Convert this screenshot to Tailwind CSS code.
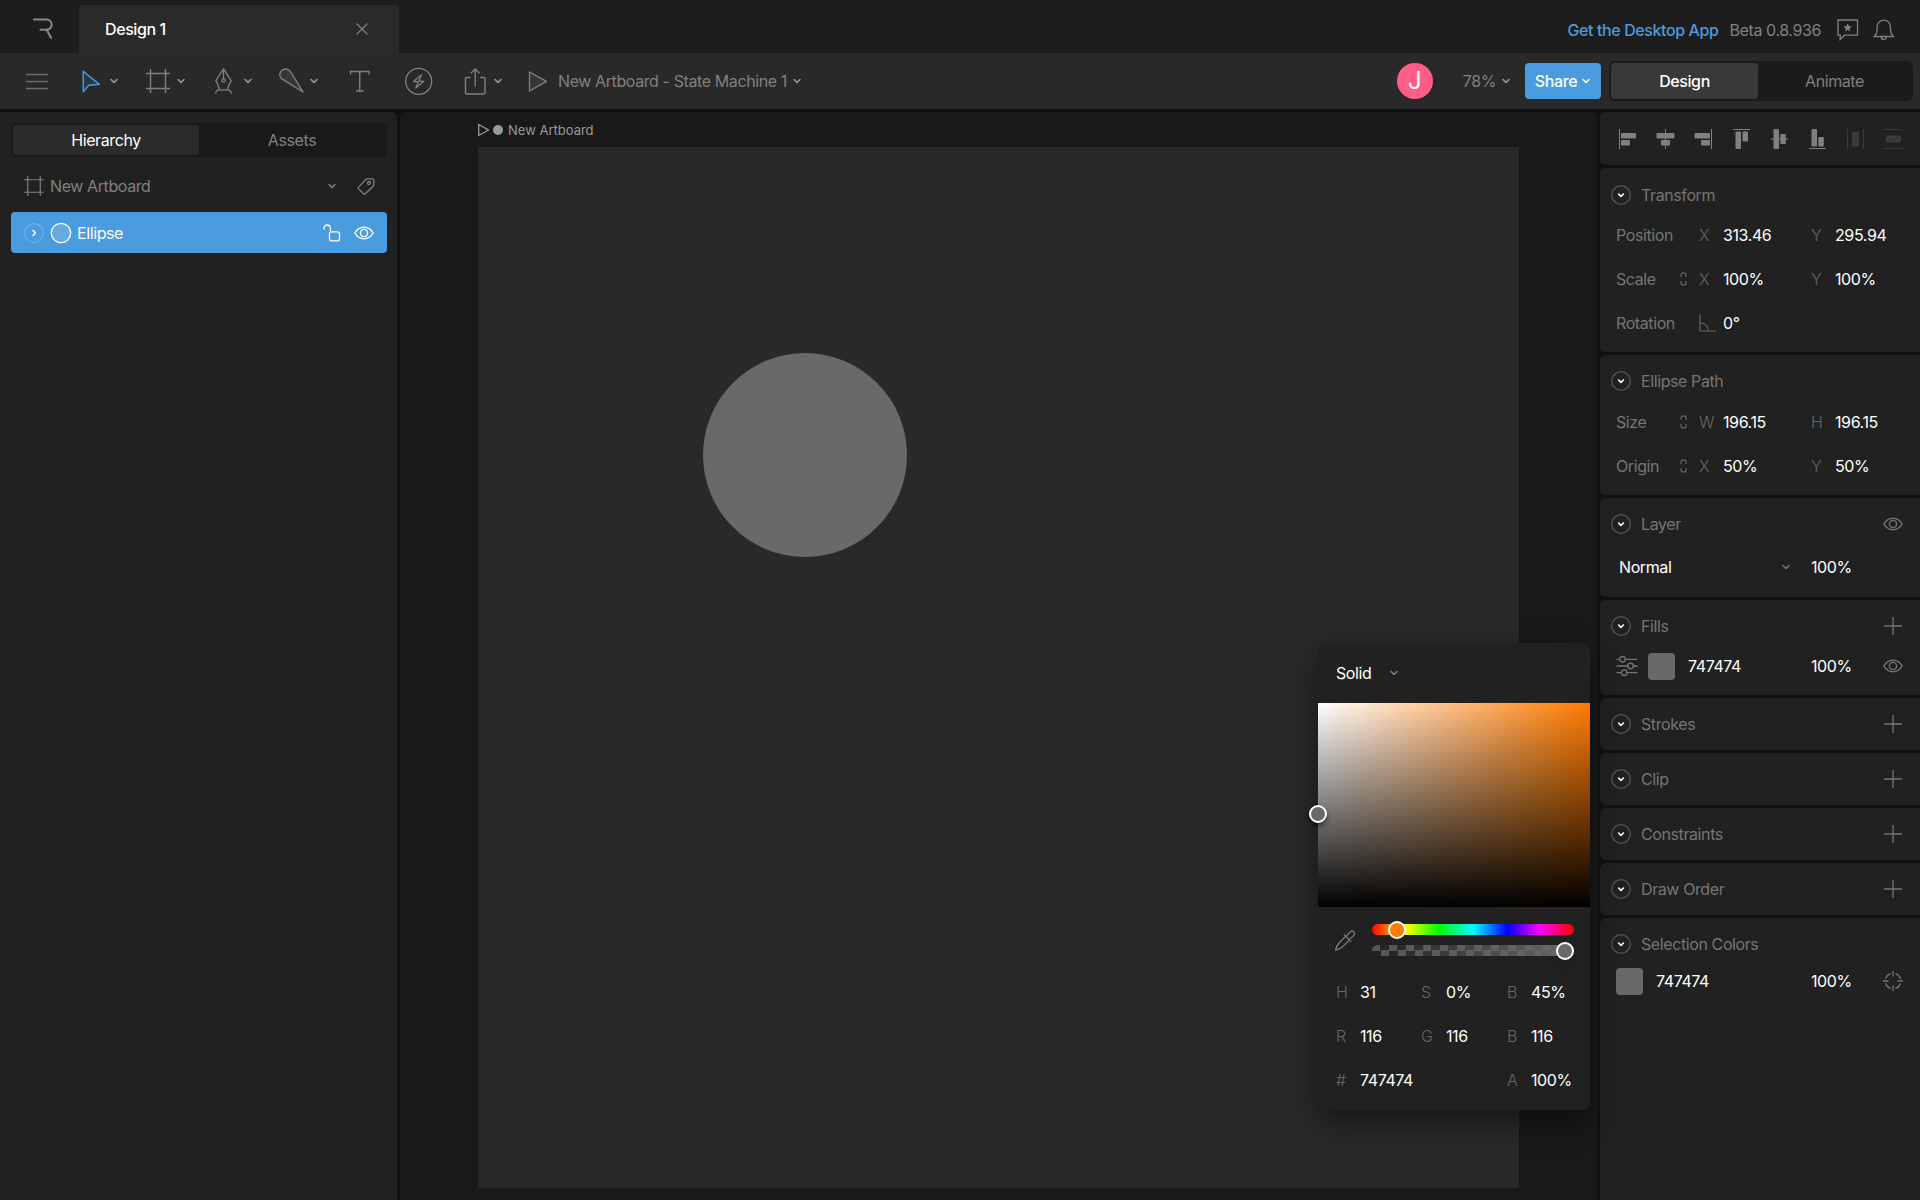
<!DOCTYPE html>
<html lang="en">
<head>
  <meta charset="utf-8" />
  <meta name="viewport" content="width=device-width, initial-scale=1" />
  <title>Design 1</title>
  <script src="https://cdn.jsdelivr.net/npm/@tailwindcss/browser@4"></script>
</head>
<body class="bg-[#111] font-['Inter',sans-serif] text-base leading-6 text-[#808080] min-h-screen flex flex-col overflow-hidden">

  <!-- Shared icons -->
  <svg class="hidden">
    <symbol id="chevron" viewBox="0 0 10 10"><path d="M2 3.5l3 3 3-3" fill="none" stroke="currentColor" stroke-width="1.5" stroke-linecap="round" stroke-linejoin="round"/></symbol>
    <symbol id="toggle" viewBox="0 0 20 20"><circle cx="10" cy="10" r="9.3" fill="none" stroke="#555" stroke-width="1.3"/><path d="M7.6 9l2.4 2.3L12.4 9" fill="none" stroke="#fff" stroke-width="1.6" stroke-linecap="round" stroke-linejoin="round"/></symbol>
    <symbol id="plus" viewBox="0 0 20 20"><path d="M10 1v18M1 10h18" stroke="currentColor" stroke-width="1.3"/></symbol>
    <symbol id="eye" viewBox="0 0 20 20"><path d="M.8 10C3 6.300 6.200 4.200 10 4.200S17 6.300 19.200 10C17 13.700 13.800 15.800 10 15.800S3 13.700.8 10z" fill="none" stroke="currentColor" stroke-width="1.400"/><circle cx="10" cy="10" r="3.600" fill="none" stroke="currentColor" stroke-width="1.400"/></symbol>
    <symbol id="link" viewBox="0 0 8 14"><path d="M1 5V3.500a2.500 2.600 0 0 1 5 0V5M1 9v1.500a2.500 2.600 0 0 0 5 0V9" fill="none" stroke="currentColor" stroke-width="1.200"/></symbol>
    <symbol id="frame" viewBox="0 0 24 24"><path d="M4.500 0v24M19.500 0v24M0 4.500h24M0 19.500h24" stroke="currentColor" stroke-width="1.400" fill="none"/></symbol>
  </svg>

  <!-- Tab bar -->
  <header class="h-[53px] bg-[#1d1d1d] flex items-end justify-between">
    <div class="flex items-end h-full">
      <a href="#" aria-label="Home" class="w-[79px] h-[53px] flex items-center pl-8 pt-[5px]">
        <svg class="w-[22px] h-[22px]" viewBox="0 0 22 22" fill="none" stroke="#8a8a8a" stroke-width="2" stroke-linecap="round"><path d="M2 1.500h12.500a4.800 4.800 0 0 1 0 10.200H8.500M14.800 12l4.300 8"/></svg>
      </a>
      <div class="w-[320px] h-12 bg-[#2a2a2a] rounded-t flex items-center justify-between pl-[26px] pr-[25px] text-white font-medium">
        <span class="tracking-tight">Design 1</span>
        <button aria-label="Close tab" class="p-1 text-[#808080]"><svg class="w-4 h-4" viewBox="0 0 16 16"><path d="M2.500 2.500l11 11M13.500 2.500l-11 11" stroke="currentColor" stroke-width="1.200"/></svg></button>
      </div>
    </div>
    <div class="flex items-center h-[53px] pt-[6px] pr-[25px] tracking-tight">
      <a href="#" class="text-[#4b9bdf] font-medium">Get the Desktop App</a>
      <span class="ml-[11px]">Beta 0.8.936</span>
      <button aria-label="Feedback" class="ml-4"><svg class="w-[22px] h-[22px]" viewBox="0 0 22 22"><path d="M1 1h19.500v15.200H7.500L3.200 20.500V16.200H1z" fill="none" stroke="currentColor" stroke-width="1.300"/><path d="M10.700 4.300l1.200 2.800 3 .3-2.300 2 .7 3-2.600-1.600-2.600 1.600.7-3-2.300-2 3-.3z" fill="currentColor"/></svg></button>
      <button aria-label="Notifications" class="ml-[14px]"><svg class="w-[22px] h-[22px]" viewBox="0 0 22 22" fill="none" stroke="currentColor" stroke-width="1.300"><path d="M1.300 17.500h19c-2-1.800-2.800-3.500-2.800-6V8c0-4-2.800-6.800-6.700-6.800S4.100 4 4.100 8v3.500c0 2.500-.8 4.200-2.800 6zM8 17.500a2.800 3 0 0 0 5.600 0"/></svg></button>
    </div>
  </header>

  <!-- Toolbar -->
  <div class="h-14 bg-[#292929] flex items-center justify-between pl-[26px] pr-[7px]">
    <div class="flex items-center">
      <button aria-label="Menu" class="w-14"><svg class="w-[22px] h-6" viewBox="0 0 22 24"><path d="M0 5.500h22M0 12.500h22M0 19.500h22" stroke="#6c6c6c" stroke-width="1.300"/></svg></button>
      <button aria-label="Select" class="w-16 flex items-center gap-[3px]">
        <svg class="w-6 h-7" viewBox="0 0 24 28"><path d="M1.200 4.200L17.300 17.400 6.800 18.300 1.200 24.900z" fill="#28394a" stroke="#4b9bdf" stroke-width="1.400" stroke-linejoin="round"/></svg>
        <svg class="w-[10px] h-[10px] text-[#9a9a9a]"><use href="#chevron"/></svg>
      </button>
      <button aria-label="Artboard" class="w-[69px] flex items-center gap-[6px]">
        <svg class="w-6 h-6"><use href="#frame"/></svg>
        <svg class="w-[10px] h-[10px] text-[#9a9a9a]"><use href="#chevron"/></svg>
      </button>
      <button aria-label="Pen" class="w-16 flex items-center gap-[10px]">
        <svg class="w-[18px] h-7" viewBox="0 0 18 28" fill="none" stroke="currentColor" stroke-width="1.300"><path d="M8.500 1.500v10.200M8.500 1.800L.8 13.700c1.700 2.600 2.900 5.400 3.600 9.100h8.200c.7-3.700 1.900-6.500 3.600-9.100zM.5 26.500c.5-2.500 1.700-3.700 3.900-3.700M16.500 26.500c-.5-2.500-1.700-3.700-3.900-3.700"/><circle cx="8.500" cy="13.500" r="1.700"/></svg>
        <svg class="w-[10px] h-[10px] text-[#9a9a9a]"><use href="#chevron"/></svg>
      </button>
      <button aria-label="Bone" class="w-[70px] flex items-center gap-[5px]">
        <svg class="w-[25px] h-7" viewBox="0 0 25 28"><path d="M24 25L2.200 11.400C-.3 8.300.8 4 4.500 2.500c3.200-1.200 6.500.2 7.700 3.300z" fill="#373737" stroke="currentColor" stroke-width="1.400" stroke-linejoin="round"/></svg>
        <svg class="w-[10px] h-[10px] text-[#9a9a9a]"><use href="#chevron"/></svg>
      </button>
      <button aria-label="Text" class="w-14"><svg class="w-[22px] h-7" viewBox="0 0 22 28"><path d="M1.500 7.500v-3H20v3M10.700 4.500V24M7 24h7.500" fill="none" stroke="currentColor" stroke-width="1.400"/></svg></button>
      <button aria-label="Events" class="w-[59px]"><svg class="w-7 h-7" viewBox="0 0 28 28" fill="none" stroke="currentColor" stroke-width="1.300" stroke-linejoin="round"><circle cx="13.700" cy="14.300" r="13"/><path d="M16.500 7.800L8.500 14.500l4.800.3-2.500 6.200 8-6.700-4.800-.3z"/></svg></button>
      <button aria-label="Export" class="w-16 flex items-center gap-[7px]">
        <svg class="w-[22px] h-7" viewBox="0 0 22 28" fill="none" stroke="currentColor" stroke-width="1.400"><path d="M6.500 10.500H2.500a1 1 0 0 0-1 1V26a1 1 0 0 0 1 1H20a1 1 0 0 0 1-1V11.500a1 1 0 0 0-1-1H16M11.200 19.500V2M6.800 6.300l4.400-4.400 4.400 4.400"/></svg>
        <svg class="w-[10px] h-[10px] text-[#9a9a9a]"><use href="#chevron"/></svg>
      </button>
      <button class="flex items-center tracking-tight">
        <svg class="w-[22px] h-7 mr-2" viewBox="0 0 22 28"><path d="M1.500 5L18.500 14.400 1.500 24z" fill="#373737" stroke="currentColor" stroke-width="1.300" stroke-linejoin="round"/></svg>
        New Artboard - State Machine 1
        <svg class="w-[10px] h-[10px] text-[#9a9a9a] ml-[5px]"><use href="#chevron"/></svg>
      </button>
    </div>
    <div class="flex items-center">
      <button aria-label="Account" class="w-9 h-9 rounded-full bg-[#ff5c87] text-white text-2xl">J</button>
      <button class="flex items-center gap-[5px] ml-[30px] tracking-tight">78%<svg class="w-[10px] h-[10px] text-[#9a9a9a]"><use href="#chevron"/></svg></button>
      <button class="ml-[14px] w-[76px] h-9 rounded bg-[#4b9bdf] text-white font-medium tracking-tight flex items-center justify-center gap-1">Share<svg class="w-[10px] h-[10px]"><use href="#chevron"/></svg></button>
      <div role="tablist" class="ml-2 w-[304px] h-10 rounded-md bg-[#1b1b1b] p-[2px] flex tracking-tight">
        <button role="tab" aria-selected="true" class="w-[147px] rounded bg-[#393939] text-white font-medium">Design</button>
        <button role="tab" aria-selected="false" class="flex-1">Animate</button>
      </div>
    </div>
  </div>

  <div class="flex flex-1 gap-[3px] pt-[3px]">

    <!-- Hierarchy -->
    <aside class="w-[397px] shrink-0 rounded-tr-md bg-[#212121] pl-[11px] pr-[10px] pt-[11px] tracking-tight">
      <div role="tablist" class="h-[34px] rounded-md bg-[#191919] p-[2px] flex">
        <button role="tab" aria-selected="true" class="w-1/2 rounded bg-[#2b2b2b] text-white">Hierarchy</button>
        <button role="tab" aria-selected="false" class="w-1/2">Assets</button>
      </div>
      <div class="h-[55px] flex items-center pl-[13px] pr-3 pt-[3px]">
        <svg class="w-5 h-5"><use href="#frame"/></svg>
        <span class="ml-[6px] flex-1">New Artboard</span>
        <button aria-label="Artboards"><svg class="w-[10px] h-[10px]"><use href="#chevron"/></svg></button>
        <button aria-label="Tag" class="ml-5"><svg class="w-[18px] h-[18px]" viewBox="0 0 18 18" fill="none" stroke="currentColor" stroke-width="1.300" stroke-linejoin="round"><path d="M9.500 1.800h5.500a1.700 1.700 0 0 1 1.700 1.700v5.200L8.300 16.800a1.300 1.300 0 0 1-1.800 0L1.600 11.900a1.300 1.300 0 0 1 0-1.800z"/><circle cx="12" cy="6" r="1.500"/></svg></button>
      </div>
      <div class="h-[41px] rounded-[4px] bg-[#4b9bdf] text-white flex items-center pl-[13px] pr-[13px]">
        <button aria-label="Expand"><svg class="w-5 h-5" viewBox="0 0 20 20" fill="none"><circle cx="10" cy="10" r="9.300" stroke="#73b1e6" stroke-width="1.200"/><path d="M9 7.500l2.400 2.500L9 12.500" stroke="#fff" stroke-width="1.600" stroke-linecap="round" stroke-linejoin="round"/></svg></button>
        <svg class="w-[22px] h-[22px] ml-[6px]" viewBox="0 0 22 22"><circle cx="11" cy="11" r="9.700" fill="#66aae4" stroke="#fff" stroke-width="1.300"/></svg>
        <span class="ml-[5px] flex-1">Ellipse</span>
        <button aria-label="Lock"><svg class="w-[18px] h-[18px]" viewBox="0 0 18 18" fill="none" stroke="#fff" stroke-width="1.300"><path d="M1 5.500V4.200a3.200 3.200 0 0 1 6.400 0V8"/><rect x="6.500" y="7.800" width="10" height="9" rx="2"/></svg></button>
        <button aria-label="Visibility" class="ml-[13px]"><svg class="w-5 h-5"><use href="#eye"/></svg></button>
      </div>
    </aside>

    <!-- Stage -->
    <main class="relative flex-1 rounded-t-md bg-[#191919] px-[78px] pb-3">
      <div class="h-[35px] flex items-center text-[13px] text-[#999]">
        <svg class="w-3 h-[14px]" viewBox="0 0 12 14"><path d="M.7 1.500L10.500 7 .7 12.500z" fill="none" stroke="currentColor" stroke-width="1.300"/></svg>
        <span class="w-[10px] h-[10px] rounded-full bg-[#999] ml-[3px] mr-[5px]"></span>
        New Artboard
      </div>
      <div class="relative aspect-square bg-[#292929]">
        <div class="absolute left-[225px] top-[206px] w-[204px] h-[204px] rounded-full bg-[#696969]"></div>
      </div>

      <!-- Color picker -->
      <section class="absolute right-[7px] top-[531px] w-[272px] h-[467px] rounded-lg bg-[#212121] shadow-[0_12px_30px_rgba(0,0,0,0.45)] tracking-tight">
        <div class="h-[60px] flex items-center pl-[18px] text-white">
          <select aria-label="Fill type" class="appearance-none w-[53px] tracking-tight"><option>Solid</option></select>
          <svg class="w-[10px] h-[10px] text-[#808080] pointer-events-none"><use href="#chevron"/></svg>
        </div>
        <div class="relative h-[204px] bg-[linear-gradient(to_top,#000,transparent),linear-gradient(to_right,#fff,#ff7b00)]">
          <div class="absolute -left-[9px] top-[102px] w-[18px] h-[18px] rounded-full border-2 border-white bg-[#696969] shadow-md shadow-black/50"></div>
        </div>
        <div class="flex pl-4 pr-4 pt-[17px]">
          <button aria-label="Pick color" class="w-[38px] h-[34px]"><svg class="w-[22px] h-[22px]" viewBox="0 0 22 22" fill="none" stroke="currentColor" stroke-width="1.200" stroke-linejoin="round"><path d="M11.800 6.200L4.500 13.500c-1.800 1.800-2.300 3.800-3 6.700 2.900-.7 4.900-1.200 6.700-3l7.300-7.300M9.800 4.400l7.500 7.500M12 6.500c2-2 3.300-4.300 5.100-5.200 2-.9 4.100 1.200 3.200 3.200-.9 1.800-3.200 3.100-5.200 5.100"/></svg></button>
          <div class="flex-1 flex flex-col gap-[10px]">
            <input type="range" aria-label="Hue" min="0" max="360" value="31" class="block w-full h-[11px] appearance-none rounded-full bg-[linear-gradient(to_right,#f00,#ff0_17%,#0f0_33%,#0ff_50%,#00f_67%,#f0f_83%,#f00)] [&::-webkit-slider-thumb]:appearance-none [&::-webkit-slider-thumb]:w-[18px] [&::-webkit-slider-thumb]:h-[18px] [&::-webkit-slider-thumb]:rounded-full [&::-webkit-slider-thumb]:border-2 [&::-webkit-slider-thumb]:border-white [&::-webkit-slider-thumb]:bg-[#ff7b00]" />
            <div class="rounded-full bg-[conic-gradient(#212121_25%,#555_0_50%,#212121_0_75%,#555_0)] bg-[length:17px_11px]">
              <input type="range" aria-label="Alpha" min="0" max="100" value="100" class="block w-full h-[11px] appearance-none rounded-full bg-[linear-gradient(to_right,transparent,#696969)] [&::-webkit-slider-thumb]:appearance-none [&::-webkit-slider-thumb]:w-[18px] [&::-webkit-slider-thumb]:h-[18px] [&::-webkit-slider-thumb]:rounded-full [&::-webkit-slider-thumb]:border-2 [&::-webkit-slider-thumb]:border-white [&::-webkit-slider-thumb]:bg-[#696969] [&::-webkit-slider-thumb]:shadow-lg" />
            </div>
          </div>
        </div>
        <div class="grid grid-cols-[24px_61px_25px_61px_24px_1fr] auto-rows-[44px] items-center pl-[18px] pt-3">
          <label for="hue" class="font-light text-[#666]">H</label><input id="hue" value="31" class="w-full text-white tracking-tight" />
          <label for="sat" class="font-light text-[#666]">S</label><input id="sat" value="0%" class="w-full text-white tracking-tight" />
          <label for="bri" class="font-light text-[#666]">B</label><input id="bri" value="45%" class="w-full text-white tracking-tight" />
          <label for="red" class="font-light text-[#666]">R</label><input id="red" value="116" class="w-full text-white tracking-tight" />
          <label for="green" class="font-light text-[#666]">G</label><input id="green" value="116" class="w-full text-white tracking-tight" />
          <label for="blue" class="font-light text-[#666]">B</label><input id="blue" value="116" class="w-full text-white tracking-tight" />
          <label for="hex" class="font-light text-[#666]">#</label><input id="hex" value="747474" class="col-span-3 w-full text-white tracking-tight" />
          <label for="alpha" class="font-light text-[#666]">A</label><input id="alpha" value="100%" class="w-full text-white tracking-tight" />
        </div>
      </section>
    </main>

    <!-- Inspector -->
    <aside class="w-[320px] shrink-0 flex flex-col gap-[3px] tracking-tight text-[#757575]">
      <div class="h-[53px] rounded-l-md bg-[#212121] flex items-center gap-[18px] pl-[18px] text-[#808080]">
        <button aria-label="Align left"><svg class="w-5 h-5" viewBox="0 0 20 20" fill="currentColor"><path d="M1 0h1v20H1z"/><rect x="3" y="4" width="15" height="5.500" rx="1"/><rect x="3" y="11" width="9" height="5.500" rx="1"/></svg></button>
        <button aria-label="Align center"><svg class="w-5 h-5" viewBox="0 0 20 20" fill="currentColor"><path d="M9 0h1v20H9z"/><rect x="0.500" y="4" width="18" height="5.500" rx="1"/><rect x="5" y="11" width="9" height="5.500" rx="1"/></svg></button>
        <button aria-label="Align right"><svg class="w-5 h-5" viewBox="0 0 20 20" fill="currentColor"><path d="M17 0h1v20h-1z"/><rect x="0.500" y="4" width="15.500" height="5.500" rx="1"/><rect x="7" y="11" width="9" height="5.500" rx="1"/></svg></button>
        <button aria-label="Align top"><svg class="w-5 h-5" viewBox="0 0 20 20" fill="currentColor"><path d="M1 0h17v1H1z"/><rect x="3.500" y="2.500" width="5.500" height="17.500" rx="1"/><rect x="10.500" y="2.500" width="5.500" height="10" rx="1"/></svg></button>
        <button aria-label="Align middle"><svg class="w-5 h-5" viewBox="0 0 20 20" fill="currentColor"><path d="M.5 9.500h17.500v1H.5z"/><rect x="3.500" y="0" width="5.500" height="20" rx="1"/><rect x="10.300" y="5" width="5.500" height="10" rx="1"/></svg></button>
        <button aria-label="Align bottom"><svg class="w-5 h-5" viewBox="0 0 20 20" fill="currentColor"><path d="M1 19h17v1H1z"/><rect x="3.500" y="0" width="5.500" height="17.500" rx="1"/><rect x="10.300" y="8" width="5.500" height="9.500" rx="1"/></svg></button>
        <button aria-label="Distribute horizontally" class="text-[#3a3a3a]"><svg class="w-5 h-5" viewBox="0 0 20 20" fill="currentColor"><path d="M1 0h1v20H1zM17 0h1v20h-1z"/><rect x="6" y="2.500" width="7" height="15" rx="1"/></svg></button>
        <button aria-label="Distribute vertically" class="text-[#3a3a3a]"><svg class="w-5 h-5" viewBox="0 0 20 20" fill="currentColor"><path d="M0 0h19v1H0zM0 19h19v1H0z"/><rect x="2" y="6.500" width="15" height="7" rx="2"/></svg></button>
      </div>

      <section class="rounded-l-md bg-[#212121] pb-[7px]">
        <h2 class="h-[45px] pt-2 pl-[11px] flex items-center gap-[10px]"><button aria-label="Toggle Transform"><svg class="w-5 h-5"><use href="#toggle"/></svg></button>Transform</h2>
        <div class="grid grid-cols-[64px_19px_24px_88px_24px_1fr] auto-rows-[44px] items-center pl-4">
          <span class="col-span-2">Position</span>
          <label for="px" class="font-light text-[#666]">X</label><input id="px" value="313.46" class="w-full text-white tracking-tight" />
          <label for="py" class="font-light text-[#666]">Y</label><input id="py" value="295.94" class="w-full text-white tracking-tight" />
          <span>Scale</span><svg class="w-2 h-[14px] text-[#666]"><use href="#link"/></svg>
          <label for="sx" class="font-light text-[#666]">X</label><input id="sx" value="100%" class="w-full text-white tracking-tight" />
          <label for="sy" class="font-light text-[#666]">Y</label><input id="sy" value="100%" class="w-full text-white tracking-tight" />
          <label for="rot" class="col-span-2">Rotation</label>
          <svg class="w-[18px] h-[18px] text-[#666]" viewBox="0 0 18 18" fill="none" stroke="currentColor" stroke-width="1.200"><path d="M1 .5v16.500h16M1 9c5 0 8 3 8 8"/></svg>
          <input id="rot" value="0°" class="w-full text-white tracking-tight" />
        </div>
      </section>

      <section class="rounded-l-md bg-[#212121] pb-[7px]">
        <h2 class="h-[45px] pt-[7px] pl-[11px] flex items-center gap-[10px]"><button aria-label="Toggle Ellipse Path"><svg class="w-5 h-5"><use href="#toggle"/></svg></button>Ellipse Path</h2>
        <div class="grid grid-cols-[64px_19px_24px_88px_24px_1fr] auto-rows-[44px] items-center pl-4">
          <span>Size</span><svg class="w-2 h-[14px] text-[#666]"><use href="#link"/></svg>
          <label for="w" class="font-light text-[#666]">W</label><input id="w" value="196.15" class="w-full text-white tracking-tight" />
          <label for="h" class="font-light text-[#666]">H</label><input id="h" value="196.15" class="w-full text-white tracking-tight" />
          <span>Origin</span><svg class="w-2 h-[14px] text-[#666]"><use href="#link"/></svg>
          <label for="ox" class="font-light text-[#666]">X</label><input id="ox" value="50%" class="w-full text-white tracking-tight" />
          <label for="oy" class="font-light text-[#666]">Y</label><input id="oy" value="50%" class="w-full text-white tracking-tight" />
        </div>
      </section>

      <section class="rounded-l-md bg-[#212121] pb-[6px]">
        <h2 class="h-[45px] pt-[7px] pl-[11px] pr-[17px] flex items-center gap-[10px]"><button aria-label="Toggle Layer"><svg class="w-5 h-5"><use href="#toggle"/></svg></button><span class="flex-1">Layer</span><button aria-label="Layer visibility"><svg class="w-5 h-5"><use href="#eye"/></svg></button></h2>
        <div class="h-12 flex items-center pl-[19px]">
          <select aria-label="Blend mode" class="appearance-none w-[162px] text-white tracking-tight"><option>Normal</option></select>
          <svg class="w-[10px] h-[10px] mr-5 pointer-events-none"><use href="#chevron"/></svg>
          <input aria-label="Layer opacity" value="100%" class="w-[72px] text-white tracking-tight" />
        </div>
      </section>

      <section class="rounded-l-md bg-[#212121] pb-2">
        <h2 class="h-[45px] pt-[7px] pl-[11px] pr-[17px] flex items-center gap-[10px]"><button aria-label="Toggle Fills"><svg class="w-5 h-5"><use href="#toggle"/></svg></button><span class="flex-1">Fills</span><button aria-label="Add fill"><svg class="w-5 h-5"><use href="#plus"/></svg></button></h2>
        <div class="h-[42px] flex items-center pl-4">
          <button aria-label="Fill options"><svg class="w-[22px] h-[22px]" viewBox="0 0 22 22" fill="none" stroke="currentColor" stroke-width="1.300"><path d="M.5 4.300h3.200M9.300 4.300h12M.5 11h11M17.500 11h4M.5 17.700h5M11 17.700h10.300"/><circle cx="6.500" cy="4.300" r="2.800"/><circle cx="14.500" cy="11" r="2.800"/><circle cx="8.200" cy="17.700" r="2.800"/></svg></button>
          <button aria-label="Fill color" class="ml-[10px] w-[27px] h-[27px] rounded-sm bg-[#696969]"></button>
          <input aria-label="Fill hex" value="747474" class="ml-[13px] w-[123px] text-white tracking-tight" />
          <input aria-label="Fill opacity" value="100%" class="w-[72px] text-white tracking-tight" />
          <button aria-label="Fill visibility"><svg class="w-5 h-5"><use href="#eye"/></svg></button>
        </div>
      </section>

      <section class="rounded-l-md bg-[#212121] pb-[7px]">
        <h2 class="h-[45px] pt-[7px] pl-[11px] pr-[17px] flex items-center gap-[10px]"><button aria-label="Toggle Strokes"><svg class="w-5 h-5"><use href="#toggle"/></svg></button><span class="flex-1">Strokes</span><button aria-label="Add stroke"><svg class="w-5 h-5"><use href="#plus"/></svg></button></h2>
      </section>
      <section class="rounded-l-md bg-[#212121] pb-[7px]">
        <h2 class="h-[45px] pt-[7px] pl-[11px] pr-[17px] flex items-center gap-[10px]"><button aria-label="Toggle Clip"><svg class="w-5 h-5"><use href="#toggle"/></svg></button><span class="flex-1">Clip</span><button aria-label="Add clip"><svg class="w-5 h-5"><use href="#plus"/></svg></button></h2>
      </section>
      <section class="rounded-l-md bg-[#212121] pb-[7px]">
        <h2 class="h-[45px] pt-[7px] pl-[11px] pr-[17px] flex items-center gap-[10px]"><button aria-label="Toggle Constraints"><svg class="w-5 h-5"><use href="#toggle"/></svg></button><span class="flex-1">Constraints</span><button aria-label="Add constraint"><svg class="w-5 h-5"><use href="#plus"/></svg></button></h2>
      </section>
      <section class="rounded-l-md bg-[#212121] pb-[7px]">
        <h2 class="h-[45px] pt-[7px] pl-[11px] pr-[17px] flex items-center gap-[10px]"><button aria-label="Toggle Draw Order"><svg class="w-5 h-5"><use href="#toggle"/></svg></button><span class="flex-1">Draw Order</span><button aria-label="Add draw order"><svg class="w-5 h-5"><use href="#plus"/></svg></button></h2>
      </section>

      <section class="flex-1 rounded-tl-md bg-[#212121]">
        <h2 class="h-[45px] pt-[7px] pl-[11px] flex items-center gap-[10px]"><button aria-label="Toggle Selection Colors"><svg class="w-5 h-5"><use href="#toggle"/></svg></button>Selection Colors</h2>
        <div class="h-9 flex items-center pl-4">
          <button aria-label="Selection color" class="w-[27px] h-[27px] rounded-sm bg-[#696969]"></button>
          <input aria-label="Selection hex" value="747474" class="ml-[13px] w-[155px] text-white tracking-tight" />
          <input aria-label="Selection opacity" value="100%" class="w-[72px] text-white tracking-tight" />
          <button aria-label="Select items using color"><svg class="w-5 h-5" viewBox="0 0 20 20" fill="none" stroke="currentColor" stroke-width="1.300"><path d="M10 0v5.500M10 14.500V20M0 10h5.500M14.500 10H20"/><circle cx="10" cy="10" r="7.800" stroke-dasharray="7.250 5" stroke-dashoffset="-2.500"/></svg></button>
        </div>
      </section>
    </aside>
  </div>
</body>
</html>
